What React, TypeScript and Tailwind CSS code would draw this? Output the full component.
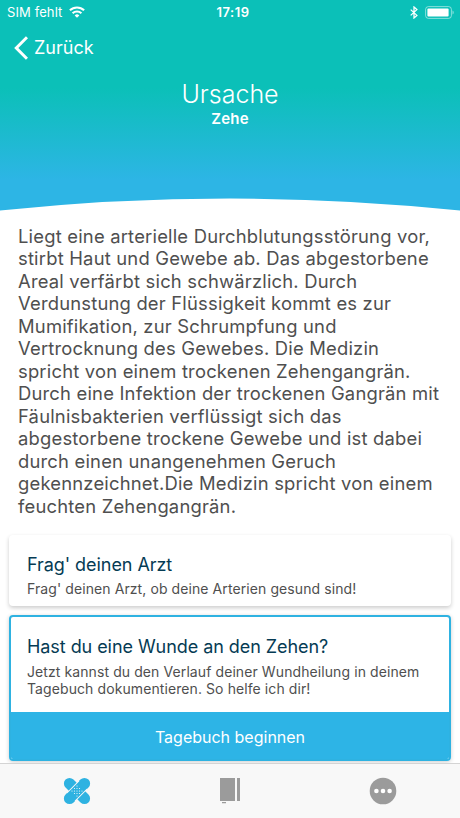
const causeText = [
  'Liegt eine arterielle Durchblutungsstörung vor,',
  'stirbt Haut und Gewebe ab. Das abgestorbene',
  'Areal verfärbt sich schwärzlich. Durch',
  'Verdunstung der Flüssigkeit kommt es zur',
  'Mumifikation, zur Schrumpfung und',
  'Vertrocknung des Gewebes. Die Medizin',
  'spricht von einem trockenen Zehengangrän.',
  'Durch eine Infektion der trockenen Gangrän mit',
  'Fäulnisbakterien verflüssigt sich das',
  'abgestorbene trockene Gewebe und ist dabei',
  'durch einen unangenehmen Geruch',
  'gekennzeichnet.Die Medizin spricht von einem',
  'feuchten Zehengangrän.',
];

function WifiIcon() {
  return (
    <svg viewBox="0 0 16 12" className="w-4 h-3" fill="currentColor">
      <path d="M8 11.8 5.7 9.4a3.3 3.3 0 0 1 4.6 0L8 11.8Z" />
      <path d="M3.6 7.2a6.4 6.4 0 0 1 8.8 0" fill="none" stroke="currentColor" strokeWidth="2.1" />
      <path d="M.9 4.3a10.3 10.3 0 0 1 14.2 0" fill="none" stroke="currentColor" strokeWidth="2.1" />
    </svg>
  );
}

function BluetoothIcon() {
  return (
    <svg viewBox="0 0 8 13" className="w-2 h-[13px]" fill="none" stroke="currentColor" strokeWidth="1.3">
      <path d="m.7 3.6 6.2 5.8L4 12V1l2.9 2.6L.7 9.4" />
    </svg>
  );
}

function BatteryIcon() {
  return (
    <svg viewBox="0 0 30 13" className="w-[30px] h-[13px]">
      <rect x=".6" y=".6" width="25.8" height="11.8" rx="2.8" fill="none" stroke="white" strokeOpacity=".5" />
      <rect x="2.4" y="2.4" width="21.2" height="8.2" rx="1" fill="white" />
      <path d="M27.5 4.4c1.7.7 1.7 3.5 0 4.2Z" fill="white" fillOpacity=".5" />
    </svg>
  );
}

function PlasterIcon() {
  return (
    <svg viewBox="0 0 28 28" className="w-7 h-7">
      <g transform="rotate(45 14 14)">
        <rect x="-2.2" y="8.4" width="32.4" height="11.2" rx="5.6" fill="#2eb2e1" />
      </g>
      <g transform="rotate(-45 14 14)">
        <rect x="-2.2" y="8.3" width="32.4" height="11.4" rx="5.7" fill="#2eb2e1" />
        <path d="M5.5 8.3h17M5.5 19.7h17" stroke="#f8f8f8" strokeWidth="1" />
      </g>
      <g fill="#f8f8f8">
        <circle cx="14" cy="9" r=".6" />
        <circle cx="11.5" cy="11.5" r=".6" />
        <circle cx="14" cy="11.5" r=".6" />
        <circle cx="16.5" cy="11.5" r=".6" />
        <circle cx="9" cy="14" r=".6" />
        <circle cx="11.5" cy="14" r=".6" />
        <circle cx="14" cy="14" r=".6" />
        <circle cx="16.5" cy="14" r=".6" />
        <circle cx="19" cy="14" r=".6" />
        <circle cx="11.5" cy="16.5" r=".6" />
        <circle cx="14" cy="16.5" r=".6" />
        <circle cx="16.5" cy="16.5" r=".6" />
        <circle cx="14" cy="19" r=".6" />
      </g>
    </svg>
  );
}

function DiaryIcon() {
  return (
    <svg viewBox="0 0 20 28" className="w-5 h-7" fill="#9b9b9b">
      <path d="M0 1h15v23H0zM17 1h3v23h-3zM2 25h4v1.3H2z" />
    </svg>
  );
}

function MoreIcon() {
  return (
    <svg viewBox="0 0 28 28" className="w-7 h-7">
      <circle cx="14" cy="14" r="13.3" fill="#9b9b9b" />
      <g fill="#fff">
        <circle cx="7.4" cy="14" r="2.3" />
        <circle cx="14" cy="14" r="2.3" />
        <circle cx="20.6" cy="14" r="2.3" />
      </g>
    </svg>
  );
}

function Header() {
  return (
    <header className="h-[211px] shrink-0 grid text-white bg-[linear-gradient(180deg,#0bc0b8_0px,#0bc0b8_88px,#2db5e5_180px)]">
      <div className="col-start-1 row-start-1">
        <div className="grid grid-cols-3 items-center h-6 pl-[7px] pr-[5px]">
          <div className="flex items-center gap-[7px] text-[13px]">
            <span className="pt-px tracking-[0.1px]">SIM fehlt</span>
            <WifiIcon />
          </div>
          <span className="pt-px pl-1 text-center text-[13px] font-semibold tracking-[0.5px]">17:19</span>
          <div className="flex items-center justify-end gap-[7px]">
            <BluetoothIcon />
            <BatteryIcon />
          </div>
        </div>
        <button className="flex items-center gap-1.5 h-[47px] pl-3.5 text-[18px]">
          <svg viewBox="0 0 14 24" className="w-3.5 h-6" fill="none" stroke="currentColor" strokeWidth="3">
            <path d="M13 1.2 2.3 12 13 22.8" />
          </svg>
          Zurück
        </button>
        <div className="pt-[7px] text-center">
          <h1 className="text-[25px] leading-8 font-light">Ursache</h1>
          <p className="text-[15px] leading-[18px] font-semibold tracking-[0.2px]">Zehe</p>
        </div>
      </div>
      {/* Curved lower edge */}
      <svg viewBox="0 0 460 13" className="col-start-1 row-start-1 self-end w-full h-[13px]" fill="white">
        <path d="M0 12.5Q230-11.5 460 12.5V13H0Z" />
      </svg>
    </header>
  );
}

export default function App() {
  return (
    <div className="h-[818px] flex flex-col overflow-hidden bg-white font-[Inter,sans-serif] text-[#4f4f4f]">
      <Header />

      <main className="flex-1 min-h-0 px-[9px]">
        <p className="pt-[13.5px] pl-[9px] text-[18.4px] leading-[22.5px] tracking-[0.2px] whitespace-nowrap">
          {causeText.map((line) => (
            <span key={line} className="block">{line}</span>
          ))}
        </p>

        <section className="mt-[18px] h-[71px] px-[18px] pt-[18px] rounded-[4px] bg-white shadow-[0_2px_4px_rgba(0,0,0,0.2)]">
          <h2 className="text-[18px] leading-6 tracking-[-0.06px] text-[#053b54]">Frag' deinen Arzt</h2>
          <p className="pt-[3px] text-[14px] leading-[17px] tracking-[0.09px]">Frag' deinen Arzt, ob deine Arterien gesund sind!</p>
        </section>

        <section className="mt-[9px] h-[146px] flex flex-col rounded-[4px] border-2 border-[#2eb2e1] overflow-hidden shadow-[0_1px_4px_rgba(0,0,0,0.2)]">
          <div className="flex-1 px-4 pt-[18px]">
            <h2 className="text-[18px] leading-6 tracking-[-0.06px] text-[#053b54]">Hast du eine Wunde an den Zehen?</h2>
            <p className="pt-1 text-[14px] leading-[17px] tracking-[0.09px] whitespace-nowrap">
              Jetzt kannst du den Verlauf deiner Wundheilung in deinem
              <br />
              Tagebuch dokumentieren. So helfe ich dir!
            </p>
          </div>
          <button className="h-[47px] pt-[3px] text-[16px] text-white bg-[#2db4e6]">Tagebuch beginnen</button>
        </section>
      </main>

      <nav className="h-[55px] shrink-0 grid grid-cols-3 justify-items-center pt-[13px] border-t border-[#d4d4d4] bg-[#f8f8f8]">
        <PlasterIcon />
        <DiaryIcon />
        <MoreIcon />
      </nav>
    </div>
  );
}
